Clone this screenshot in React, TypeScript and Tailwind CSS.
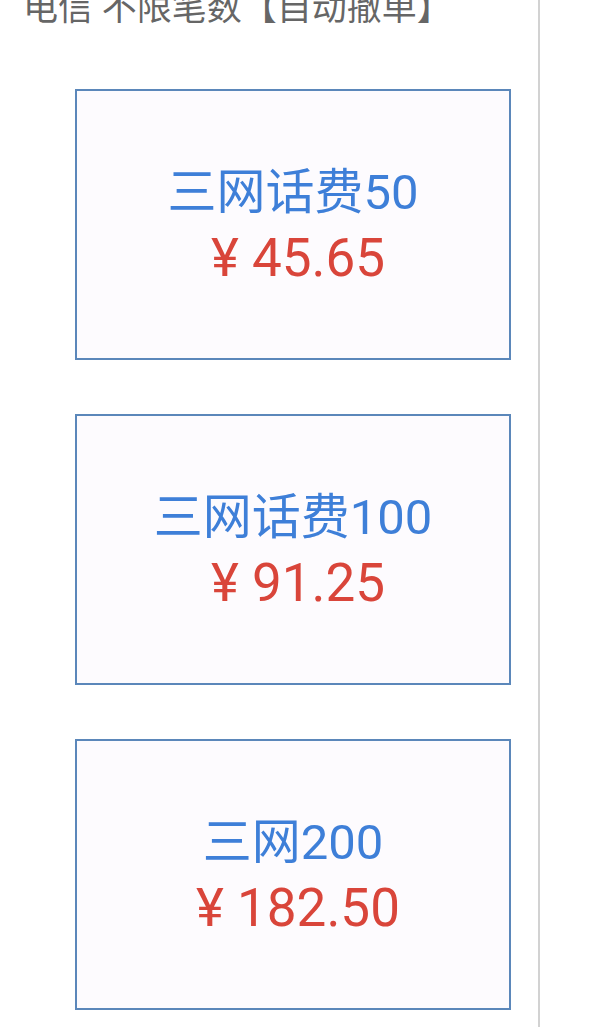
const items = [
  { name: "三网话费50", price: "45.65" },
  { name: "三网话费100", price: "91.25" },
  { name: "三网200", price: "182.50" },
];

export default function App() {
  return (
    <div
      className="flex h-[1027px] w-[596px] overflow-hidden bg-white"
      style={{ fontFamily: '"Roboto", "Noto Sans CJK SC", sans-serif' }}
    >
      <div className="w-[540px] shrink-0 border-r-2 border-[#d2d2d2]">
        <div className="-mt-[12px] pl-[23px] text-[35px] leading-[42px] text-[#666666]">
          电信 不限笔数【自动撤单】
        </div>
        <div className="mt-[59px] flex flex-col gap-[54px]">
          {items.map((item) => (
            <div
              key={item.name}
              className="ml-[75px] flex h-[271px] w-[436px] flex-col items-center justify-center border-2 border-[#5b87ba] bg-[#fdfbfe] pt-[4px]"
            >
              <div className="text-[49px] leading-[60px] text-[#3e7fd8]">{item.name}</div>
              <div className="mt-[3px] pl-[10px] text-[53px] leading-[64px] text-[#d9453a]">¥ {item.price}</div>
            </div>
          ))}
        </div>
      </div>
      <div className="flex-1 bg-white" />
    </div>
  );
}
